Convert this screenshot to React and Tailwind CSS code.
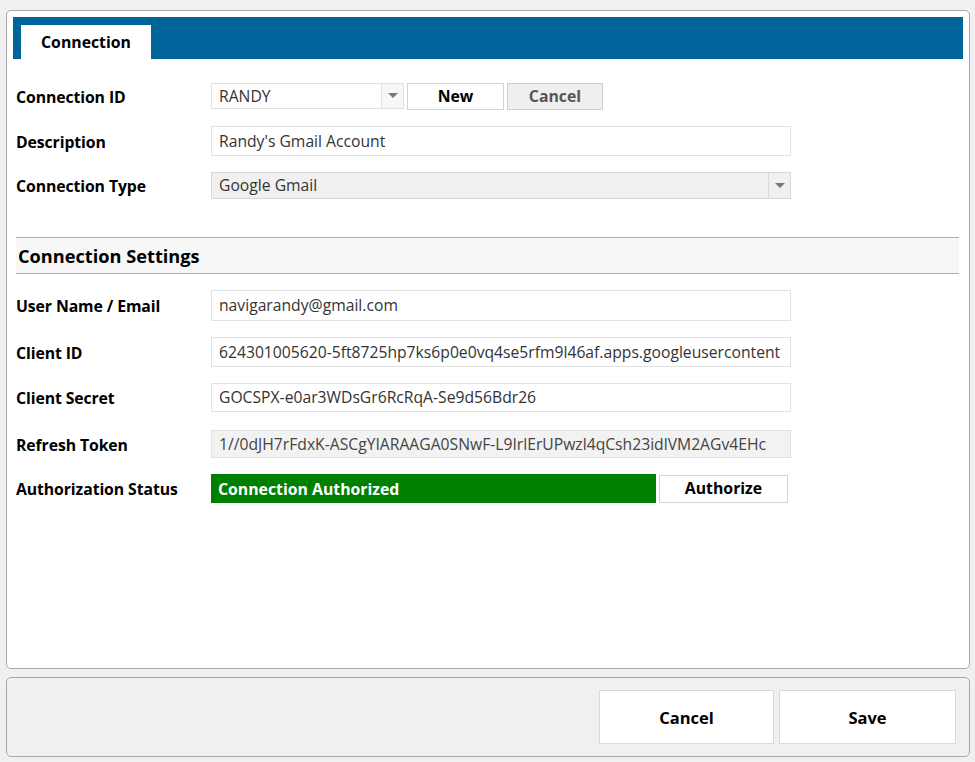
const font = { fontFamily: '"Open Sans", "Noto Sans", sans-serif' };

const Label = ({ children }) => (
  <div className="w-[195px] shrink-0 pt-[3px] text-[15.8px] font-bold text-black tracking-[-0.1px]">{children}</div>
);

const Field = ({ value, gray, h = 'h-[28px]' }) => (
  <div
    className={`w-[580px] ${h} flex items-center px-[7px] pt-[1px] border border-[#e2e2e2] text-[15.7px] overflow-hidden whitespace-nowrap ${
      gray ? 'bg-[#f2f2f2] text-[#444]' : 'bg-white text-[#333]'
    }`}
  >
    {value}
  </div>
);

const Arrow = () => (
  <svg width="10" height="6" viewBox="0 0 10 6">
    <path d="M0 0 L10 0 L5 5 Z" fill="#777" />
  </svg>
);

export default function App() {
  return (
    <div style={font} className="w-[975px] h-[762px] bg-[#f0f0f0] pl-[6px] pr-[5px] pt-[10px] flex flex-col">
      <div className="h-[659px] bg-white border border-[#a8a8a8] rounded-[5px] p-[6px] flex flex-col">
        <div className="h-[42px] bg-[#00659b] pl-[8px] pt-[8px] flex">
          <div className="w-[130px] h-[34px] pt-[2px] bg-white flex items-center justify-center text-[15.8px] font-bold text-black">
            Connection
          </div>
        </div>

        <div className="pl-[3px] flex flex-col">
          <div className="mt-[24px] h-[26px] flex items-center">
            <Label>Connection ID</Label>
            <div className="w-[193px] h-[26px] flex border border-[#e2e2e2]">
              <div className="flex-1 flex items-center px-[7px] pt-[1px] text-[15.7px] text-[#333]">RANDY</div>
              <div className="w-[22px] border-l border-[#e2e2e2] bg-[#f7f7f7] flex items-center justify-center">
                <Arrow />
              </div>
            </div>
            <button className="ml-[3px] w-[97px] h-[27px] pt-[1px] bg-white border border-[#d4d4d4] text-[15.8px] font-bold text-black">
              New
            </button>
            <button className="ml-[3px] w-[96px] h-[27px] pt-[1px] bg-[#efefef] border border-[#cfcfcf] text-[15.8px] font-bold text-[#555]">
              Cancel
            </button>
          </div>

          <div className="mt-[17px] flex items-center">
            <Label>Description</Label>
            <Field value="Randy's Gmail Account" h="h-[30px]" />
          </div>

          <div className="mt-[16px] flex items-center">
            <Label>Connection Type</Label>
            <div className="w-[580px] h-[27px] flex border border-[#d8d8d8] bg-[#f0f0f0]">
              <div className="flex-1 flex items-center px-[7px] pt-[1px] text-[15.7px] text-[#333]">Google Gmail</div>
              <div className="w-[22px] border-l border-[#d8d8d8] flex items-center justify-center">
                <Arrow />
              </div>
            </div>
          </div>

          <div className="mt-[38px] mr-[4px] h-[37px] pt-[3px] border-t border-b border-[#b0b0b0] bg-[#f7f7f7] flex items-center pl-[2px]">
            <span className="text-[18.2px] font-bold text-black">Connection Settings</span>
          </div>

          <div className="mt-[16px] flex items-center">
            <Label>User Name / Email</Label>
            <Field value="navigarandy@gmail.com" h="h-[31px]" />
          </div>

          <div className="mt-[16px] flex items-center">
            <Label>Client ID</Label>
            <Field value="624301005620-5ft8725hp7ks6p0e0vq4se5rfm9l46af.apps.googleusercontent" h="h-[30px]" />
          </div>

          <div className="mt-[16px] flex items-center">
            <Label>Client Secret</Label>
            <Field value="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" h="h-[29px]" />
          </div>

          <div className="mt-[18px] flex items-center">
            <Label>Refresh Token</Label>
            <Field value="1//0dJH7rFdxK-ASCgYIARAAGA0SNwF-L9IrlErUPwzl4qCsh23idlVM2AGv4EHc" gray />
          </div>

          <div className="mt-[16px] flex items-center">
            <Label>Authorization Status</Label>
            <div className="w-[445px] h-[29px] pt-[2px] bg-[#008000] flex items-center px-[7px] text-[15.8px] font-bold text-white">
              Connection Authorized
            </div>
            <button className="ml-[3px] w-[129px] h-[28px] bg-white border border-[#d4d4d4] text-[15.8px] font-bold text-black">
              Authorize
            </button>
          </div>
        </div>
      </div>

      <div className="mt-[8px] h-[80px] bg-[#f0f0f0] border border-[#a8a8a8] rounded-[5px] flex items-center justify-end pr-[13px] gap-[5px]">
        <button className="w-[175px] h-[54px] pt-[3px] bg-white border border-[#d9d9d9] text-[16.5px] font-bold text-black">
          Cancel
        </button>
        <button className="w-[177px] h-[54px] pt-[3px] bg-white border border-[#d9d9d9] text-[16.5px] font-bold text-black">
          Save
        </button>
      </div>
    </div>
  );
}
